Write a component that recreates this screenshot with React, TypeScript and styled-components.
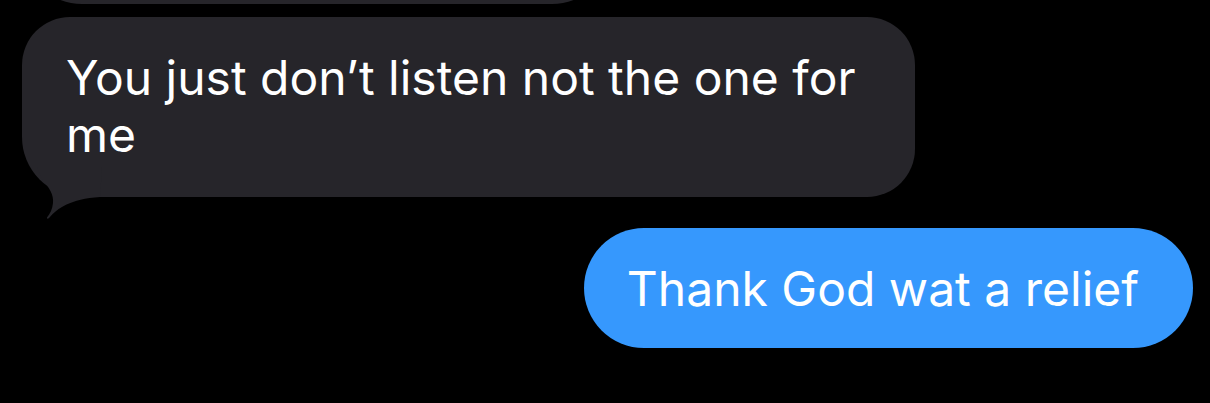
import React from 'react';
import styled, { createGlobalStyle } from 'styled-components';

const GlobalStyle = createGlobalStyle`
  html, body {
    margin: 0;
    padding: 0;
    background: #000;
  }
  body {
    font-family: Inter, "Noto Sans", "Liberation Sans", sans-serif;
    -webkit-font-smoothing: antialiased;
  }
`;

const GRAY = '#26252a';
const BLUE = '#3698fd';

const Thread = styled.div`
  width: 1210px;
  height: 403px;
  overflow: hidden;
  display: flex;
  flex-direction: column;
  align-items: flex-start;
  background: #000;
`;

const Bubble = styled.div<{ $mine?: boolean }>`
  position: relative;
  box-sizing: border-box;
  color: #fff;
  font-size: 48px;
  line-height: 57px;
  letter-spacing: 0;
  background: ${(p) => (p.$mine ? BLUE : GRAY)};
`;

const EarlierBubble = styled(Bubble)`
  margin: -116px 0 0 22px;
  width: 590px;
  height: 120px;
  border-radius: 60px;
`;

const IncomingBubble = styled(Bubble)`
  margin: 13px 0 0 22px;
  width: 893px;
  height: 180px;
  padding: 32px 30px 0 44px;
  border-radius: 48px 48px 48px 60px;
`;

const OutgoingBubble = styled(Bubble)`
  align-self: flex-end;
  margin: 31px 17px 0 0;
  height: 120px;
  padding: 0 54px 0 43px;
  display: flex;
  align-items: center;
  border-radius: 60px;
`;

const Tail = styled.svg`
  position: absolute;
  left: 0;
  top: 150px;
  width: 80px;
  height: 60px;
  overflow: visible;
  pointer-events: none;
`;

function IncomingTail() {
  return (
    <Tail viewBox="0 150 80 60">
      <path
        fill={GRAY}
        d="M15 150 L21 164 C27 170 32 178 31 186 C30.5 192 28 197 25 200.5 C24.5 201.8 26 202 27 201 C36 191 48 182 78 180 L80 150 Z"
      />
    </Tail>
  );
}

export default function App() {
  return (
    <>
      <GlobalStyle />
      <Thread>
        <EarlierBubble />
        <IncomingBubble>
          You just don’t listen not the one for me
          <IncomingTail />
        </IncomingBubble>
        <OutgoingBubble $mine>Thank God wat a relief</OutgoingBubble>
      </Thread>
    </>
  );
}
